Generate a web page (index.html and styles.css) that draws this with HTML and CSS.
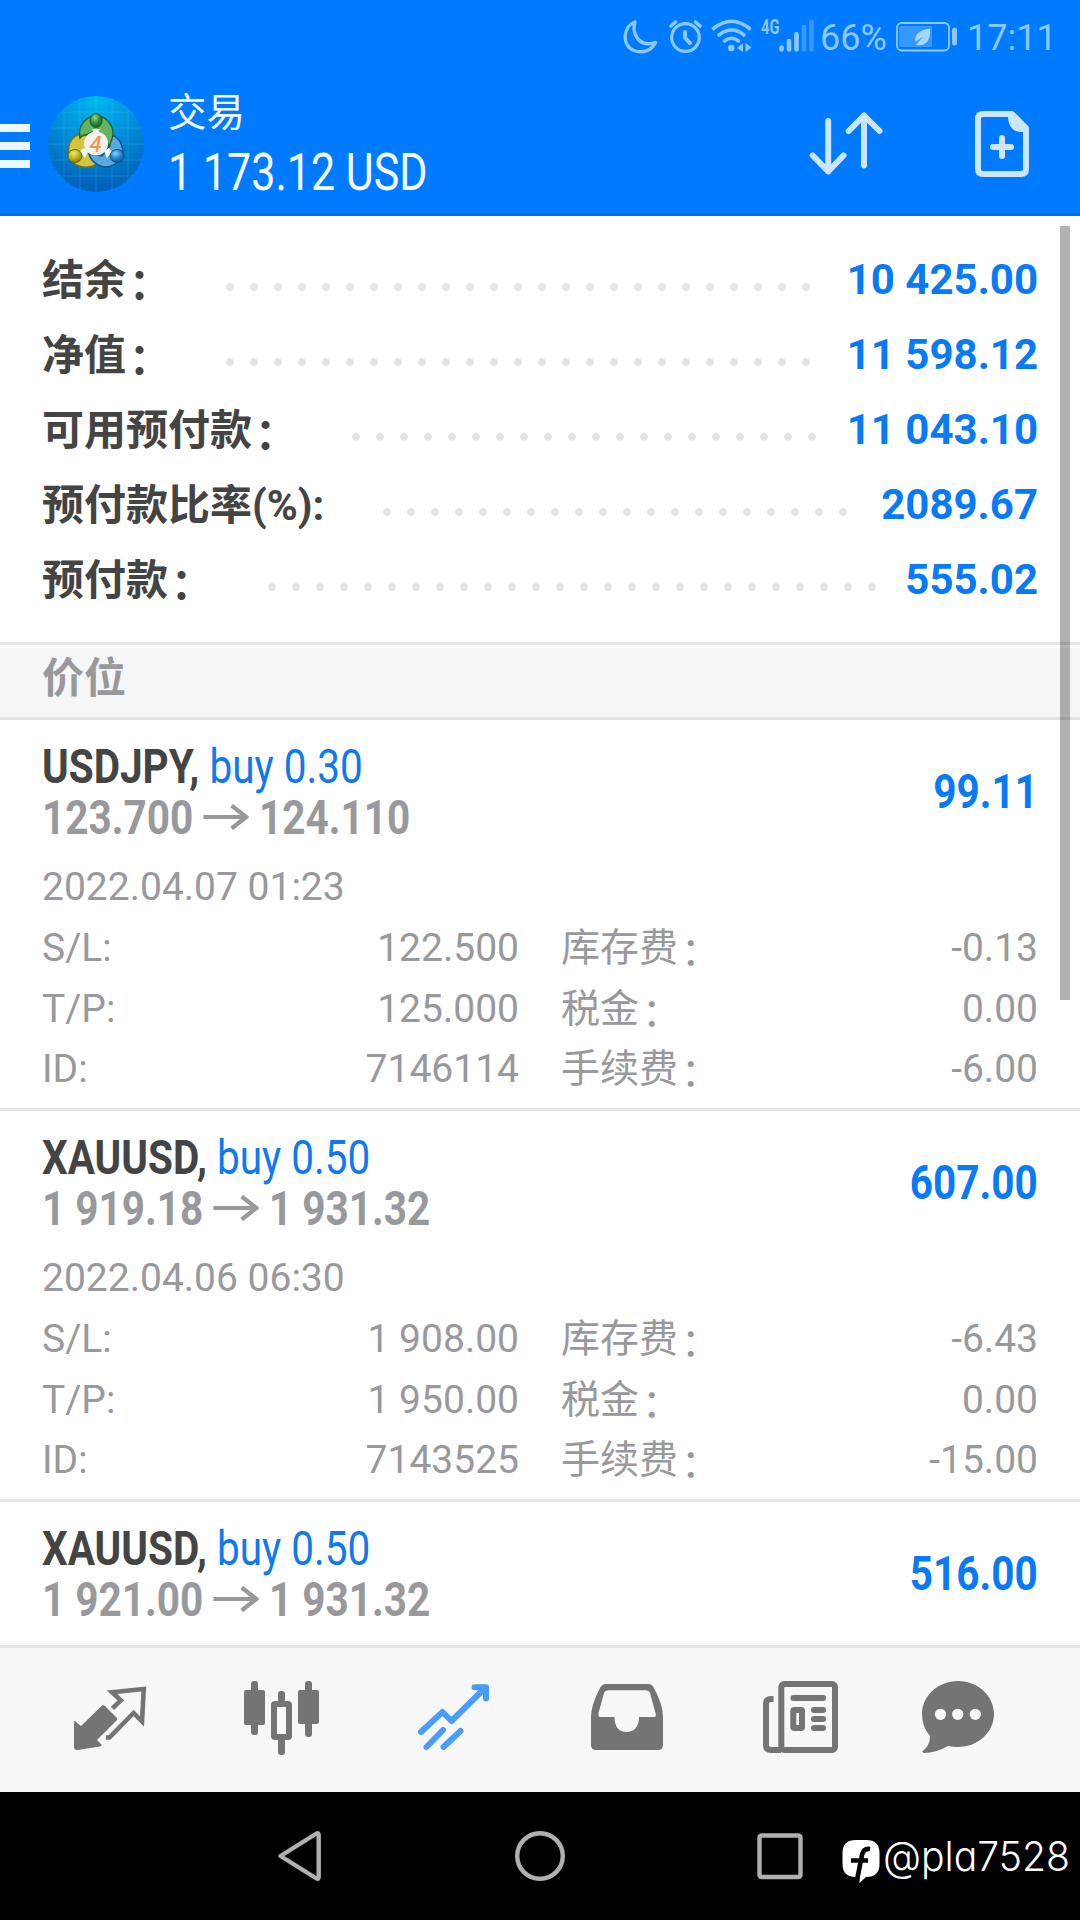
FILE: index.html
```html
<!DOCTYPE html>
<html lang="zh-CN">
<head>
<meta charset="utf-8">
<title>交易</title>
<link rel="stylesheet" href="styles.css">
</head>
<body>
<div class="screen">
  <header class="header">
    <div class="status">
      <svg class="st-icons" width="208" height="44" viewBox="616 14 208 44" fill="none" stroke="#8bc8ff" stroke-linecap="round">
        <path d="M635 22C622 27 622 46 634 50.500C643 54 652 50 655.500 42.500C648 45 642 43.500 638 39C634 34 633 28 635 22Z" stroke-width="3.400" stroke-linejoin="round"/>
        <circle cx="685.500" cy="37.500" r="13.800" stroke-width="3.200"/>
        <path d="M685 32V38L690 43" stroke-width="4"/>
        <path d="M671 26L675.500 22M700 26L695.500 22" stroke-width="3.600"/>
        <g stroke-width="3.600"><path d="M713.500 28.500Q731.500 14 749.500 28.500"/><path d="M719 35Q731.500 25 744 35"/><path d="M724.500 41Q731.500 35.500 738.500 41"/></g>
        <circle cx="731.300" cy="48" r="3.200" fill="#8bc8ff" stroke="none"/>
        <path d="M743 43V52L737 48ZM745.500 43V52L751.500 47.500Z" fill="#8bc8ff" stroke="none"/>
        <text class="net" x="761" y="33.800" textLength="18.500" lengthAdjust="spacingAndGlyphs">4G</text>
        <g stroke-width="4.600"><path d="M781.500 47.500V49.500M789 41V49.500M796.500 34V49.500"/><path d="M804 27V49.500M811.500 21.500V49.500" stroke="#3598ff"/></g>
      </svg>
      <span class="pct">66%</span>
      <svg class="battery" width="64" height="34" viewBox="895 20 64 34" fill="none">
        <rect x="897" y="23" width="52" height="27.500" rx="4.500" stroke="#8bc8ff" stroke-width="1.800"/>
        <rect x="899" y="26" width="33" height="21" rx="2" fill="#3598ff"/>
        <rect x="952" y="27.500" width="5" height="18" rx="2.500" fill="#8bc8ff"/>
        <path d="M930 28.500C920 30 914 34 915.500 42L923 36.500L916 45C925 46.500 931 42 930 28.500Z" fill="#a6d5ff"/>
      </svg>
      <span class="clock">17:11</span>
    </div>
    <div class="toolbar">
      <svg class="menu" width="30" height="44" viewBox="0 0 30 44" fill="#ebf8ff"><path d="M0 0H30V8H0ZM0 18H30V26H0ZM0 36H30V44H0Z"/></svg>
      <svg class="logo" width="96" height="96" viewBox="0 0 96 96">
        <defs>
          <radialGradient id="bg" cx=".5" cy=".05" r=".9"><stop offset="0" stop-color="#00b8ed"/><stop offset=".55" stop-color="#0289d7"/><stop offset="1" stop-color="#0063bb"/></radialGradient>
          <radialGradient id="g" cx=".4" cy=".3" r=".8"><stop offset="0" stop-color="#9bd08a"/><stop offset=".5" stop-color="#2f8c35"/><stop offset="1" stop-color="#145d20"/></radialGradient>
          <radialGradient id="y" cx=".4" cy=".3" r=".8"><stop offset="0" stop-color="#f3ea7c"/><stop offset=".5" stop-color="#bfb01e"/><stop offset="1" stop-color="#746d10"/></radialGradient>
          <radialGradient id="b" cx=".4" cy=".3" r=".8"><stop offset="0" stop-color="#8fd0f5"/><stop offset=".5" stop-color="#2582c6"/><stop offset="1" stop-color="#08528f"/></radialGradient>
          <clipPath id="c"><circle cx="48" cy="48" r="48"/></clipPath>
        </defs>
        <circle cx="48" cy="48" r="48" fill="url(#bg)"/>
        <path clip-path="url(#c)" d="M16 0V96M32 0V96M48 0V96M64 0V96M80 0V96M0 16H96M0 32H96M0 48H96M0 64H96M0 80H96" stroke="#5cc8f5" stroke-opacity=".2"/>
        <path d="M38 37C23 38 19 48 21 60C24 70 36 73 45 70C50 68 52 64 48 60L40 50Z" fill="#d2c43c" stroke="#6f7420" stroke-width="1.500"/>
        <path d="M60 38C73 40 76 52 74 60C68 71 58 73 50 69C45 66 42 62 41 58L54 60L62 50Z" fill="#5ba9dc" stroke="#075794" stroke-width="1.500"/>
        <path d="M32 42C29 29 39 20 48 20C59 20 68 31 64 43L61 50L56 41L48 35L40 38L34 40Z" fill="#65b261" stroke="#1e6830" stroke-width="1.500"/>
        <path d="M44 33H52L50 37H46ZM35 52L40 55L37 62L32 56ZM61 52L56 55L59 62L64 56Z" fill="#f1fbf7"/>
        <ellipse cx="48" cy="24.500" rx="6" ry="7" fill="url(#g)" stroke="#145d20"/>
        <ellipse cx="27" cy="60" rx="7" ry="6.500" fill="url(#y)" stroke="#6d6812"/>
        <ellipse cx="69" cy="60" rx="7" ry="6.500" fill="url(#b)" stroke="#084f8e"/>
        <circle cx="48" cy="47.500" r="12" fill="#f4f1f0"/>
        <text class="four" x="41.500" y="55.500">4</text>
      </svg>
      <div class="heading">
        <div class="page-name">交易</div>
        <div class="total cond">1 173.12 USD</div>
      </div>
      <svg class="sort" width="78" height="70" viewBox="807 109 78 70" fill="none" stroke="#cce5ff" stroke-width="6" stroke-linecap="round" stroke-linejoin="round"><path d="M828.200 121V171.500M812.700 155.500L828.200 171.500L843.500 155.500M864 165.500V115.500M848.700 131L864 115.500L879.500 131"/></svg>
      <svg class="new" width="54" height="66" viewBox="0 0 54 66" fill="none"><path d="M8 3H37L51 17V58Q51 63 46 63H8Q3 63 3 58V8Q3 3 8 3Z" stroke="#cce5ff" stroke-width="6" stroke-linejoin="round"/><path d="M33 3H38L52 17V21H46C38 21 33 15 33 5Z" fill="#cce5ff"/><path d="M27 27V45M18 36H36" stroke="#cce5ff" stroke-width="6" stroke-linecap="round"/></svg>
    </div>
  </header>

  <main class="content">
    <section class="summary">
      <div class="sum-row"><span class="sum-label short">结余<i class="colon">：</i></span><span class="dots w25"></span><b class="sum-value">10 425.00</b></div>
      <div class="sum-row"><span class="sum-label short">净值<i class="colon">：</i></span><span class="dots w25"></span><b class="sum-value">11 598.12</b></div>
      <div class="sum-row"><span class="sum-label long">可用预付款<i class="colon">：</i></span><span class="dots w20"></span><b class="sum-value">11 043.10</b></div>
      <div class="sum-row"><span class="sum-label ratio">预付款比率(%):</span><span class="dots w20"></span><b class="sum-value">2089.67</b></div>
      <div class="sum-row"><span class="sum-label mid">预付款<i class="colon">：</i></span><span class="dots w26"></span><b class="sum-value">555.02</b></div>
    </section>
    <h2 class="section-title">价位</h2>

    <article class="trade">
      <div class="trade-head">
        <div class="trade-name">
          <div class="line cond"><b class="symbol">USDJPY,</b> <span class="side">buy 0.30</span></div>
          <div class="line prices cond">123.700 <svg class="arrow" viewBox="0 0 45 26" preserveAspectRatio="none"><path d="M0 13H42M28 1.500L42.500 13L28 24.500"/></svg> 124.110</div>
        </div>
        <div class="profit cond">99.11</div>
      </div>
      <div class="date">2022.04.07 01:23</div>
      <div class="details">
        <span>S/L:</span><span class="num">122.500</span><span class="fee">库存费<i class="colon">：</i></span><span class="num">-0.13</span>
        <span>T/P:</span><span class="num">125.000</span><span class="fee">税金<i class="colon">：</i></span><span class="num">0.00</span>
        <span>ID:</span><span class="num">7146114</span><span class="fee">手续费<i class="colon">：</i></span><span class="num">-6.00</span>
      </div>
    </article>

    <article class="trade">
      <div class="trade-head">
        <div class="trade-name">
          <div class="line cond"><b class="symbol">XAUUSD,</b> <span class="side">buy 0.50</span></div>
          <div class="line prices cond">1 919.18 <svg class="arrow" viewBox="0 0 45 26" preserveAspectRatio="none"><path d="M0 13H42M28 1.500L42.500 13L28 24.500"/></svg> 1 931.32</div>
        </div>
        <div class="profit cond">607.00</div>
      </div>
      <div class="date">2022.04.06 06:30</div>
      <div class="details">
        <span>S/L:</span><span class="num">1 908.00</span><span class="fee">库存费<i class="colon">：</i></span><span class="num">-6.43</span>
        <span>T/P:</span><span class="num">1 950.00</span><span class="fee">税金<i class="colon">：</i></span><span class="num">0.00</span>
        <span>ID:</span><span class="num">7143525</span><span class="fee">手续费<i class="colon">：</i></span><span class="num">-15.00</span>
      </div>
    </article>

    <article class="trade">
      <div class="trade-head">
        <div class="trade-name">
          <div class="line cond"><b class="symbol">XAUUSD,</b> <span class="side">buy 0.50</span></div>
          <div class="line prices cond">1 921.00 <svg class="arrow" viewBox="0 0 45 26" preserveAspectRatio="none"><path d="M0 13H42M28 1.500L42.500 13L28 24.500"/></svg> 1 931.32</div>
        </div>
        <div class="profit cond">516.00</div>
      </div>
    </article>
    <div class="scrollbar"></div>
  </main>

  <nav class="tabs">
    <svg class="tab" width="80" height="80" viewBox="70 1678 80 80" fill="#747474"><path d="M74 1721.500Q74.500 1720.500 76 1722L81 1726L101 1706.500Q103 1704.500 105 1706L116 1717Q118 1719 116.500 1720.500L97 1740L101.500 1744.500Q102 1746 100 1746.500L77.500 1750Q74 1750.300 74 1747Z"/><path d="M112.500 1708.300L120.800 1700.300L112 1692.300L143.800 1689L142 1721.500L133.600 1713L109.500 1737.500H106" fill="none" stroke="#747474" stroke-width="4.600"/></svg>
    <svg class="tab" width="80" height="80" viewBox="242 1678 80 80" fill="#747474"><rect x="251" y="1681" width="7" height="54" rx="3"/><rect x="244" y="1690" width="21" height="35" rx="2"/><rect x="305" y="1681" width="7" height="56" rx="3"/><rect x="298" y="1690" width="21" height="34" rx="2"/><rect x="278" y="1691" width="7" height="12" rx="3"/><rect x="278" y="1737" width="7" height="18" rx="3"/><rect x="274" y="1704" width="15" height="33" rx="1" fill="none" stroke="#747474" stroke-width="6"/></svg>
    <svg class="tab" width="80" height="80" viewBox="414 1678 80 80" fill="none" stroke="#479df8" stroke-width="6" stroke-linecap="round" stroke-linejoin="round"><path d="M421 1732L442.500 1712L451.500 1721L485 1688M474.500 1687.200H486V1698.500"/><path d="M426.500 1747L443 1730M443.500 1747L460.500 1731"/></svg>
    <svg class="tab" width="80" height="80" viewBox="586 1678 80 80"><path fill="#747474" fill-rule="evenodd" d="M606 1684H648Q652 1684 654 1688Q663 1705 663 1717V1745Q663 1750 658 1750H596Q591 1750 591 1745V1717Q591 1705 600 1688Q602 1684 606 1684ZM609 1690.300Q605 1690.300 604 1693L598.500 1713Q598 1717 600 1717H614.500C614.500 1727 619 1732 626.500 1732S639 1727 639 1717H654.500Q656.500 1717 655.500 1713L650 1693Q649 1690.300 645 1690.300Z"/></svg>
    <svg class="tab" width="80" height="80" viewBox="758 1678 80 80" overflow="visible" fill="none" stroke="#747474" stroke-width="6"><rect x="781.300" y="1684" width="53.700" height="66" rx="3"/><path d="M773.500 1699H771Q766 1699 766 1703.500V1745Q766 1750 771 1750H781"/><path d="M793.500 1698H823M814 1710H823M814 1719H823M814 1728H823" stroke-linecap="round"/><rect x="793.300" y="1710" width="8.700" height="18" rx="1"/></svg>
    <svg class="tab chat" width="80" height="80" viewBox="918 1678 80 80"><path fill="#747474" d="M958 1681C978 1681 994 1696 994 1714S978 1747 958 1747Q953 1747 948 1746Q936 1753 924 1753Q921 1752 924 1750Q930 1745 930 1736Q922 1727 922 1714C922 1696 938 1681 958 1681Z"/><g fill="#f7f7f7"><circle cx="940.500" cy="1714.300" r="5.600"/><circle cx="957.700" cy="1714.300" r="5.600"/><circle cx="975.300" cy="1714.300" r="5.600"/></g></svg>
  </nav>

  <footer class="navbar">
    <svg class="nav-icons" width="540" height="56" viewBox="270 1828 540 56" fill="none" stroke="#b0b0b0" stroke-width="4.400" stroke-linejoin="round"><path d="M280.500 1856L316.500 1833.500Q318.700 1832.500 318.700 1835V1877Q318.700 1879.500 316.500 1878.500Z"/><circle cx="540" cy="1856" r="22.800"/><rect x="759.500" y="1835.500" width="41" height="41.500" rx="2"/></svg>
    <svg class="mark" width="240" height="56" viewBox="840 1830 240 56"><path fill="#fff" d="M856 1840H866Q879.500 1840 879.500 1853V1864Q879.500 1877 866 1877L859.500 1883V1877H856Q842.500 1877 842.500 1864V1853Q842.500 1840 856 1840Z"/><path d="M870 1849Q863.500 1848 862 1855L857 1880M851 1860.500H868" fill="none" stroke="#000" stroke-width="4.600"/><text class="handle" x="883" y="1870.500" textLength="187" lengthAdjust="spacingAndGlyphs">@pla7528</text></svg>
  </footer>
</div>
</body>
</html>
```
FILE: styles.css
```css
* { box-sizing: border-box; }

body {
  margin: 0;
  background: #fff;
  font-family: Roboto, "Noto Sans CJK SC", sans-serif;
}

svg { display: block; flex: none; }

.screen {
  width: 1080px;
  height: 1920px;
  display: flex;
  flex-direction: column;
  overflow: hidden;
}

/* glyphs narrowed to condensed proportions */
.cond {
  transform: scaleX(.844);
  transform-origin: left center;
  white-space: pre;
}

/* header */
.header {
  height: 216px;
  flex: none;
  background: #007aff;
  border-bottom: 3px solid #076fdd;
}

.status {
  height: 72px;
  display: flex;
  align-items: flex-start;
  padding: 14px 20px 0 616px;
  color: #8bc8ff;
  font-size: 36px;
  line-height: 48px;
}

.net { font-size: 21px; font-weight: 700; fill: #8bc8ff; stroke: none; }
.pct { width: 71px; margin-left: -4px; }
.battery { margin: 6px 8px 0 4px; }

.toolbar {
  height: 141px;
  display: flex;
  align-items: flex-start;
}

.menu { margin-top: 52px; }
.logo { margin: 24px 0 0 18px; }
.four { font-size: 22px; font-weight: 500; font-style: italic; fill: #f09a48; }

.heading {
  width: 643px;
  margin: 16px 0 0 24px;
  color: #f2fcff;
}

.page-name { font-size: 38.500px; line-height: 50px; }
.total { font-size: 51px; line-height: 70px; }
.sort { margin-top: 37px; margin-left: -4px; }
.new { margin: 39px 0 0 90px; }

/* account summary */
.content {
  height: 1429px;
  flex: none;
  position: relative;
  overflow: hidden;
}

.summary {
  height: 429px;
  padding: 26px 42px 0;
  border-bottom: 3px solid #e5e5e5;
}

.sum-row {
  height: 75px;
  display: flex;
  font-size: 42px;
  line-height: 75px;
}

.sum-label {
  color: #444;
  font-weight: 700;
  line-height: 77px;
  white-space: nowrap;
}

.short { width: 176px; }
.long { width: 302px; }
.ratio { width: 333px; }
.mid { width: 218px; }

.colon {
  display: inline-block;
  font-style: normal;
  transform: translate(3px, 4px);
}

.dots {
  height: 75px;
  background: radial-gradient(circle at 12px 45px, #e4e4e4 3.500px, transparent 4.300px) 0 0 / 24px 75px repeat-x;
}

.w20 { width: 480px; }
.w25 { width: 600px; }
.w26 { width: 624px; }

.sum-value { margin-left: auto; color: #087af5; }

.section-title {
  height: 72px;
  margin: 3px 0 0;
  padding: 0 42px;
  background: #f6f6f6;
  border-bottom: 3px solid #e4e4e4;
  color: #98999c;
  font-size: 42px;
  font-weight: 700;
  line-height: 62px;
}

/* positions */
.trade {
  height: 391px;
  padding: 21px 42px 0;
  border-bottom: 3px solid #e5e5e5;
  color: #98999c;
}

.trade-head {
  display: flex;
  justify-content: space-between;
  font-size: 48px;
}

.line { height: 51px; line-height: 51px; }
.symbol { color: #444; }
.side { color: #1179ee; }
.prices { font-weight: 700; }

.arrow {
  display: inline-block;
  width: 54px;
  height: 26px;
  vertical-align: 4px;
  fill: none;
  stroke: #98999c;
  stroke-width: 4.200;
}

.profit {
  color: #087af5;
  font-weight: 700;
  line-height: 102px;
  transform-origin: right center;
}

.date {
  margin-top: 13.500px;
  font-size: 39px;
  line-height: 60.500px;
}

.details {
  display: grid;
  grid-template-columns: 177px 300px 261px 258px;
  grid-auto-rows: 60.500px;
  margin-top: 1px;
  font-size: 39px;
  line-height: 60.500px;
}

.fee { padding-left: 42px; white-space: nowrap; }
.num { text-align: right; }

.scrollbar {
  position: absolute;
  left: 1060px;
  top: 10px;
  width: 10px;
  height: 774px;
  background: rgba(0, 0, 0, .3);
}

/* bottom tabs */
.tabs {
  height: 147px;
  flex: none;
  display: flex;
  gap: 92px;
  padding: 30px 82px 0 70px;
  background: #f7f7f7;
  border-top: 3px solid #e4e4e4;
}

.chat { margin-left: -12px; }

/* system navigation */
.navbar {
  height: 128px;
  flex: none;
  display: flex;
  align-items: flex-start;
  padding: 36px 0 0 270px;
  background: #000;
}

.mark { margin: 2px 0 0 30px; }

.handle {
  font-family: Inter, sans-serif;
  font-size: 41px;
  font-weight: 300;
  font-feature-settings: "cv11";
  fill: #fff;
}
```
